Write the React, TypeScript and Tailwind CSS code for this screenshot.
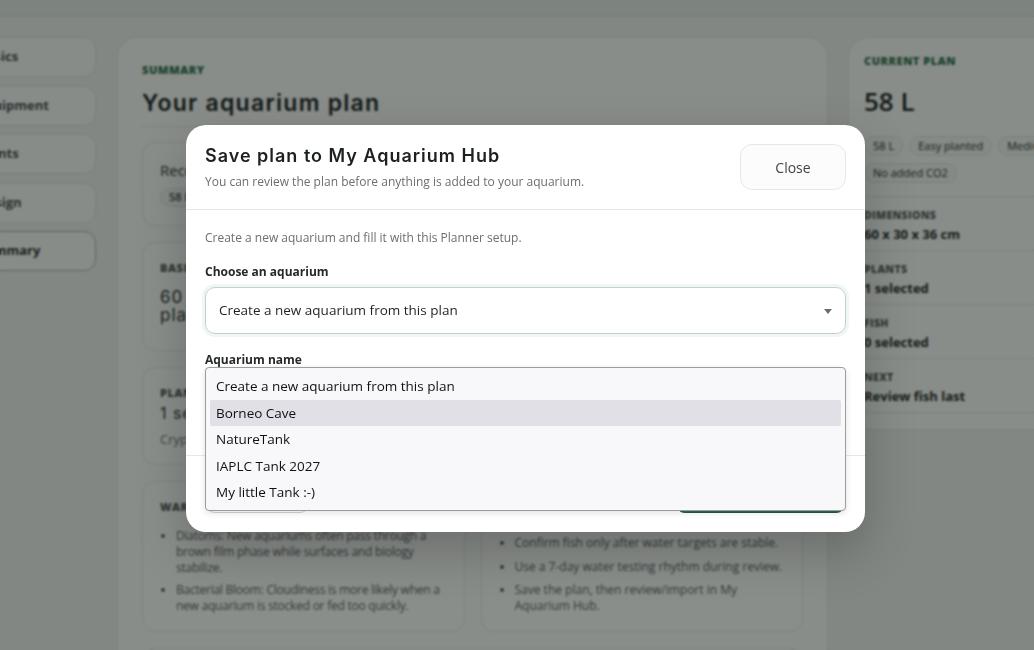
import React from 'react';

const navSteps = ['Basics', 'Equipment', 'Plants', 'Design', 'Summary'];

const planChips = ['58 L', 'Easy planted', 'Medium light', 'No added CO2'];

const planRows = [
  { label: 'Dimensions', value: '60 x 30 x 36 cm' },
  { label: 'Plants', value: '1 selected' },
  { label: 'Fish', value: '0 selected' },
  { label: 'Next', value: 'Review fish last' },
];

const aquariumOptions = [
  'Create a new aquarium from this plan',
  'Borneo Cave',
  'NatureTank',
  'IAPLC Tank 2027',
  'My little Tank :-)',
];

const warnings = [
  'Diatoms: New aquariums often pass through a brown film phase while surfaces and biology stabilize.',
  'Bacterial Bloom: Cloudiness is more likely when a new aquarium is stocked or fed too quickly.',
];

const nextSteps = [
  'Confirm fish only after water targets are stable.',
  'Use a 7-day water testing rhythm during review.',
  'Save the plan, then review/import in My Aquarium Hub.',
];

function SectionLabel({ children, green }: { children: React.ReactNode; green?: boolean }) {
  return (
    <div
      className={`text-[11px] leading-4 font-extrabold uppercase tracking-[0.05em] ${
        green ? 'text-[#2c6a47]' : 'text-[#4e5550]'
      }`}
    >
      {children}
    </div>
  );
}

function PlannerPage() {
  return (
    <div className="flex flex-col">
      <div className="h-[17px] border-b border-[#d3d8d3] bg-[#e3e6e2]" />
      <div className="-ml-[56px] flex items-start pt-[20px]">
        {/* step navigation */}
        <nav className="mr-[21px] flex w-[152px] shrink-0 flex-col gap-[8.5px]">
          {navSteps.map((step) => (
            <div
              key={step}
              className={`flex h-10 items-center rounded-[12px] border pl-[33px] text-[13px] font-bold ${
                step === 'Summary'
                  ? 'border-[#a3aba4] bg-[#f7f8f6] text-[#2a2f2b]'
                  : 'border-[#dde1dc] bg-[#f6f7f5] text-[#464c47]'
              }`}
            >
              {step}
            </div>
          ))}
        </nav>

        {/* summary */}
        <main className="mr-[20px] w-[711px] shrink-0 rounded-[20px] border border-[#dfe3de] bg-[#f8f9f7] px-6 pt-[24px] pb-6">
          <SectionLabel green>Summary</SectionLabel>
          <h1 className="mt-[10px] border-b border-[#dde1dc] pb-[8px] font-['Inter',sans-serif] text-[23px] leading-[30px] font-semibold tracking-[0.055em] text-[#1c211e]">
            Your aquarium plan
          </h1>

          <div className="mt-[15px] grid grid-cols-2 gap-4">
            <div className="flex flex-col gap-4">
              <div className="h-[84px] rounded-[14px] border border-[#dfe3de] bg-[#fbfcfa] px-[17px] pt-[17px]">
                <div className="text-[15px] leading-5 font-medium text-[#2a2f2b]">Recommended setup</div>
                <span className="mt-2 inline-flex h-[19px] items-center rounded-full border border-[#dde2dc] bg-[#f1f3f0] px-2 text-[11px] font-semibold text-[#3a403b]">
                  58 L
                </span>
              </div>
              <div className="h-[109px] rounded-[14px] border border-[#dfe3de] bg-[#fbfcfa] px-[17px] pt-[17px]">
                <SectionLabel>Basics</SectionLabel>
                <div className="mt-[12px] font-['Inter',sans-serif] text-[17px] leading-[18px] tracking-[0.06em] text-[#2a2f2b]">
                  <div>60 x 30 x 36 cm</div>
                  <div>planted layout</div>
                </div>
              </div>
              <div className="h-[98px] rounded-[14px] border border-[#dfe3de] bg-[#fbfcfa] px-[17px] pt-[17px]">
                <SectionLabel>Plants</SectionLabel>
                <div className="mt-[2px] font-['Inter',sans-serif] text-[16px] leading-5 tracking-[0.06em] text-[#2a2f2b]">
                  1 selected
                </div>
                <div className="mt-[7px] text-[13px] leading-[18px] text-[#6b716c]">Cryptocoryne wendtii</div>
              </div>
            </div>
            <div className="flex flex-col gap-4">
              <div className="h-[84px] rounded-[14px] border border-[#dfe3de] bg-[#fbfcfa]" />
              <div className="h-[109px] rounded-[14px] border border-[#dfe3de] bg-[#fbfcfa]" />
              <div className="h-[98px] rounded-[14px] border border-[#dfe3de] bg-[#fbfcfa]" />
            </div>

            <div className="h-[151px] rounded-[14px] border border-[#dfe3de] bg-[#fbfcfa] px-[17px] pt-[17px]">
              <SectionLabel>Warnings</SectionLabel>
              <ul className="mt-[13px] list-disc space-y-[6px] pl-4 text-[12px] leading-4 tracking-[-0.02em] text-[#5a605b]">
                {warnings.map((w) => (
                  <li key={w}>{w}</li>
                ))}
              </ul>
            </div>
            <div className="h-[151px] rounded-[14px] border border-[#dfe3de] bg-[#fbfcfa] px-[17px] pt-[17px]">
              <SectionLabel>Next steps</SectionLabel>
              <ul className="mt-[20px] list-disc space-y-[7.5px] pl-4 text-[12px] leading-4 text-[#5a605b]">
                {nextSteps.map((s) => (
                  <li key={s}>{s}</li>
                ))}
              </ul>
            </div>
          </div>
          <div className="mt-4 h-[120px] rounded-[14px] border border-[#dfe3de] bg-[#fbfcfa]" />
        </main>

        {/* current plan */}
        <aside className="w-[260px] shrink-0 rounded-[20px] border border-[#dfe3de] bg-[#f8f9f7] px-[15px] pt-[15px] pb-4">
          <SectionLabel green>Current plan</SectionLabel>
          <div className="mt-4 text-[26px] leading-8 font-semibold text-[#1c211e]">58 L</div>
          <div className="mt-[19px] flex flex-wrap gap-x-[6px] gap-y-[7px] pb-[13px]">
            {planChips.map((c) => (
              <span
                key={c}
                className="inline-flex h-5 items-center rounded-full border border-[#dde2dc] bg-[#f1f3f0] px-[8px] text-[11px] font-medium whitespace-nowrap text-[#262b27]"
              >
                {c}
              </span>
            ))}
          </div>
          <div className="border-t border-[#dde1dc]">
            {planRows.map((row) => (
              <div key={row.label} className="border-b border-[#dde1dc] pt-[11px] pb-[7px]">
                <div className="text-[10.5px] leading-[14px] font-extrabold uppercase tracking-[0.03em] text-[#555c57]">
                  {row.label}
                </div>
                <div className="mt-[3px] text-[13px] leading-[18px] font-bold text-[#1f2420]">{row.value}</div>
              </div>
            ))}
          </div>
        </aside>
      </div>
    </div>
  );
}

function SavePlanDialog() {
  return (
    <div className="w-[679px] rounded-[20px] bg-white shadow-[0_20px_50px_rgba(0,0,0,0.22)]">
      <div className="flex items-start justify-between border-b border-[#e6e8e6] p-[19px]">
        <div>
          <h2 className="mt-px font-['Inter',sans-serif] text-[18px] leading-[22px] font-semibold tracking-[0.055em] text-[#1c211e]">
            Save plan to My Aquarium Hub
          </h2>
          <p className="mt-[7px] text-[12px] leading-4 text-[#6b7069]">
            You can review the plan before anything is added to your aquarium.
          </p>
        </div>
        <button
          type="button"
          className="h-[46px] w-[106px] rounded-[12px] border border-[#e6e8e6] bg-[#fcfcfc] text-[14px] text-[#3f4541]"
        >
          Close
        </button>
      </div>

      <div className="relative px-[19px] pt-[20px] pb-[34px]">
        <p className="text-[12px] leading-4 text-[#6b7069]">Create a new aquarium and fill it with this Planner setup.</p>

        <label className="mt-[18px] block text-[12px] leading-4 font-bold text-[#262b28]">Choose an aquarium</label>
        <div className="mt-[7px] flex h-[47px] items-center justify-between rounded-[10px] border border-[#c3d2c8] pr-[13px] pl-[13px] shadow-[0_0_0_3px_rgba(63,138,95,0.08)]">
          <span className="text-[13.5px] text-[#1f2420]">Create a new aquarium from this plan</span>
          <svg width="8" height="5" viewBox="0 0 8 5" className="mt-px">
            <path d="M0 0h8L4 5z" fill="#6b6f6c" />
          </svg>
        </div>

        <label className="mt-[18px] block text-[12px] leading-4 font-bold text-[#262b28]">Aquarium name</label>
        <div className="mt-[7px] h-[46px] rounded-[10px] border border-[#dfe3de]" />

        {/* open option list of the aquarium select */}
        <div className="absolute top-[157px] right-[19px] left-[19px] z-10 rounded-[4px] border border-[#9c9c9c] bg-[#f8f8fa] px-[4px] pt-[5px] pb-[4px] shadow-[0_2px_6px_rgba(0,0,0,0.12)]">
          {aquariumOptions.map((opt) => (
            <div
              key={opt}
              className={`flex h-[26.5px] items-center rounded-[2px] px-[6px] text-[13.5px] text-[#111111] ${
                opt === 'Borneo Cave' ? 'bg-[#e1e0e6]' : ''
              }`}
            >
              {opt}
            </div>
          ))}
        </div>
      </div>

      <div className="flex items-center justify-between border-t border-[#e6e8e6] px-[19px] pt-[17px] pb-[19px]">
        <button
          type="button"
          className="h-10 w-[105px] rounded-[10px] border border-[#cfd5d0] bg-white text-[13px] text-[#3f4541]"
        >
          Back
        </button>
        <button
          type="button"
          className="h-10 w-[171px] rounded-[10px] border border-[#26573f] bg-[#2f6b4f] text-[13px] font-semibold text-white"
        >
          Save plan
        </button>
      </div>
    </div>
  );
}

export default function App() {
  return (
    <div className="relative h-[650px] w-[1034px] overflow-hidden bg-[#eceeeb] font-['Open_Sans',sans-serif]">
      <PlannerPage />
      <div className="absolute inset-0 bg-[rgba(10,20,14,0.47)] backdrop-blur-[1px]" />
      <div className="absolute inset-0 pt-[125px] pl-[186px]">
        <SavePlanDialog />
      </div>
    </div>
  );
}
